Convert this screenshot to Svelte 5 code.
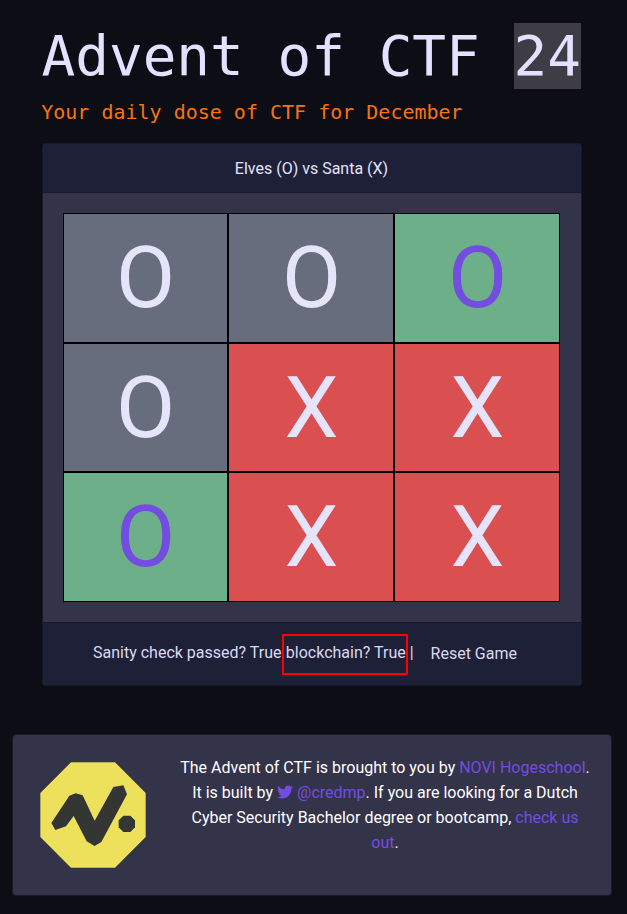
<script>
  const cells = [
    { mark: 'O', kind: 'plain' },
    { mark: 'O', kind: 'plain' },
    { mark: 'O', kind: 'win' },
    { mark: 'O', kind: 'plain' },
    { mark: 'X', kind: 'santa' },
    { mark: 'X', kind: 'santa' },
    { mark: 'O', kind: 'win' },
    { mark: 'X', kind: 'santa' },
    { mark: 'X', kind: 'santa' }
  ];
</script>

<div class="page">
  <header>
    <h1>Advent of CTF <span class="year">24</span></h1>
    <p class="tagline">Your daily dose of CTF for December</p>
  </header>

  <section class="card game">
    <div class="card-header">Elves (O) vs Santa (X)</div>
    <div class="card-body">
      <div class="board">
        {#each cells as cell}
          <div class="cell {cell.kind}">{cell.mark}</div>
        {/each}
      </div>
    </div>
    <div class="card-footer">
      <span>Sanity check passed? True</span>
      <span class="flag">blockchain? True</span>
      <span class="bar">|</span>
      <button type="button">Reset Game</button>
    </div>
  </section>

  <footer class="card about">
    <svg class="logo" viewBox="120 111 318 318" aria-label="NOVI">
      <path fill="#ede05b" d="M213 112H345L437 204V336L345 428H213L121 336V204Z" />
      <path fill="#343634" d="M154 294L208 212L227 205L248 211L284 287L340 186L370 181L381 208L304 351L284 363L260 349L221 273L198 304L166 315Z" />
      <path fill="#343634" d="M370 272H391L405 286V307L391 321H370L356 307V286Z" />
    </svg>
    <p>
      The Advent of CTF is brought to you by <a href="#novi">NOVI Hogeschool</a>.<br />
      It is built by <a href="#credmp"><svg class="bird" viewBox="0 0 512 512" aria-hidden="true"><path fill="currentColor" d="M459.37 151.716c.325 4.548.325 9.097.325 13.645 0 138.72-105.583 298.558-298.558 298.558-59.452 0-114.68-17.219-161.137-47.106 8.447.974 16.568 1.299 25.34 1.299 49.055 0 94.213-16.568 130.274-44.832-46.132-.975-84.792-31.188-98.112-72.772 6.498.974 12.995 1.624 19.818 1.624 9.421 0 18.843-1.3 27.614-3.573-48.081-9.747-84.143-51.98-84.143-102.985v-1.299c13.969 7.797 30.214 12.67 47.431 13.319-28.264-18.843-46.781-51.005-46.781-87.391 0-19.492 5.197-37.36 14.294-52.954 51.655 63.675 129.3 105.258 216.365 109.807-1.624-7.797-2.599-15.918-2.599-24.04 0-57.828 46.782-104.934 104.934-104.934 30.213 0 57.502 12.67 76.67 33.137 23.715-4.548 46.456-13.32 66.599-25.34-7.798 24.366-24.366 44.833-46.132 57.827 21.117-2.273 41.584-8.122 60.426-16.243-14.292 20.791-32.161 39.308-52.628 54.253z" /></svg> @credmp</a>. If you are looking for a Dutch<br />
      Cyber Security Bachelor degree or bootcamp, <a href="#school">check us<br />out</a>.
    </p>
  </footer>
</div>

<style>
  :global(body) {
    margin: 0;
    background: #0d0d15;
  }
  .page {
    box-sizing: border-box;
    width: 627px;
    height: 914px;
    padding: 22px 15px 0 12px;
    overflow: hidden;
    background: #0d0d15;
    color: #e4e3fc;
    font: 16px/24px Roboto, sans-serif;
  }
  header {
    padding-left: 29.5px;
    font-family: "DejaVu Sans Mono", monospace;
    white-space: nowrap;
  }
  h1 {
    margin: 0;
    font-size: 56px;
    line-height: 67px;
    font-weight: 400;
    color: #e4e0ff;
  }
  .year {
    padding-bottom: 1px;
    background: #3e3d46;
  }
  .tagline {
    margin: 8px 0 0 -0.3px;
    font-size: 20px;
    line-height: 30px;
    color: #f77313;
  }
  .card {
    box-sizing: border-box;
    border: 1px solid #191a29;
    border-radius: 4px;
    background: #33334a;
    overflow: hidden;
  }
  .game {
    width: 540px;
    margin: 16px 0 0 30px;
  }
  .card-header {
    height: 48px;
    line-height: 49px;
    padding-right: 1px;
    text-align: center;
    background: #1e2037;
    border-bottom: 1px solid #181929;
  }
  .card-body {
    padding: 20px;
  }
  .board {
    display: grid;
    width: 497px;
    height: 389px;
    grid-template-columns: 165px 166px 166px;
    grid-template-rows: 130px 129px 130px;
  }
  .cell {
    border: 1px solid #000;
    display: flex;
    align-items: flex-start;
    justify-content: center;
    font-size: 86px;
    line-height: 127px;
    color: #e5e4fa;
  }
  .cell:not(:nth-child(3n + 1)) {
    padding-left: 1px;
  }
  .plain {
    background: #676d7c;
  }
  .santa {
    background: #da5051;
  }
  .win {
    background: #6caf88;
    color: #734de0;
  }
  .card-footer {
    display: flex;
    align-items: flex-start;
    height: 62px;
    padding-left: 50px;
    line-height: 24px;
    white-space: nowrap;
    background: #1e2037;
    border-top: 1px solid #181929;
    color: #dad9f2;
  }
  .card-footer > span {
    margin-top: 18px;
  }
  .card-footer > .flag {
    box-sizing: border-box;
    width: 126px;
    height: 41px;
    margin: 11px 0 0 0.6px;
    padding: 5px 0 0 1.8px;
    border: 2px solid #f00;
    border-radius: 1px;
  }
  .card-footer > .bar {
    margin-left: 1.6px;
  }
  button {
    margin: 12px 0 0 5px;
    padding: 7px 12px;
    border: 0;
    background: none;
    color: inherit;
    font: inherit;
  }
  .about {
    display: flex;
    width: 600px;
    height: 162px;
    margin-top: 48px;
  }
  .logo {
    flex: none;
    width: 106px;
    height: 106px;
    margin: 27px 0 0 27px;
  }
  .about p {
    width: 420px;
    margin: 20px 0 0 29px;
    line-height: 25px;
    text-align: center;
    white-space: nowrap;
    color: #fff;
  }
  a {
    color: #734de0;
    text-decoration: none;
  }
  .bird {
    width: 16px;
    height: 16px;
    vertical-align: -2px;
  }
</style>
